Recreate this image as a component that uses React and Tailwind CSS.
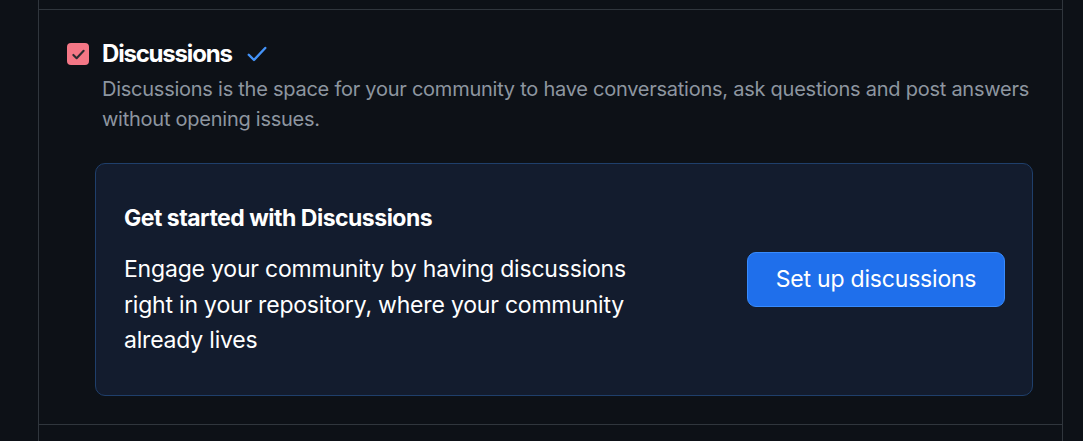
import React from 'react';

const CheckMark = ({ className, width = 1.6 }) => (
  <svg viewBox="0 0 16 16" className={className} fill="none" stroke="currentColor" strokeWidth={width} strokeLinecap="round" strokeLinejoin="round">
    <path d="M2.5 8.5l3.5 3.5 7.5-8" />
  </svg>
);

export default function App() {
  return (
    <div className="min-h-screen w-full bg-[#0d1117] font-['Inter',sans-serif] overflow-hidden">
      <div className="ml-[38px] mr-[20px] border-x border-[#30363d] h-[441px] flex flex-col">
        <div className="h-[10px] border-b border-[#30363d]" />
        <div className="pt-[30px] pl-[28px] pr-[28px] h-[415px] border-b border-[#30363d]">
          <div className="flex items-center h-[28px]">
            <div className="w-[22px] h-[22px] rounded-[4px] bg-[#f47786] flex items-center justify-center">
              <CheckMark width={2.2} className="w-[15px] h-[15px] text-[#2b2b30]" />
            </div>
            <span className="ml-[13px] text-[24px] font-bold text-white tracking-[-1.2px]">Discussions</span>
            <CheckMark className="ml-[13px] w-[24px] h-[24px] text-[#4493f8]" />
          </div>
          <p className="ml-[35px] mt-[6px] text-[20px] leading-[30px] text-[#8d96a0] tracking-[-0.25px]">
            Discussions is the space for your community to have conversations, ask questions and post answers without opening issues.
          </p>
          <div className="ml-[28px] mt-[29px] w-[938px] h-[233px] rounded-[10px] border border-[#1f3f6b] bg-[#131c2e] flex items-start justify-between pl-[28px] pr-[27px] pt-[39px]">
            <div>
              <h3 className="text-[23px] font-bold text-white tracking-[-0.5px] leading-[30px]">Get started with Discussions</h3>
              <p className="mt-[19px] w-[520px] text-[23px] leading-[35.5px] text-white tracking-[-0.2px]">
                Engage your community by having discussions right in your repository, where your community already lives
              </p>
            </div>
            <button className="mt-[49px] w-[258px] h-[55px] rounded-[9px] bg-[#1f6feb] border border-[#388bfd] text-white text-[23px] tracking-[-0.2px]">
              Set up discussions
            </button>
          </div>
        </div>
      </div>
    </div>
  );
}
